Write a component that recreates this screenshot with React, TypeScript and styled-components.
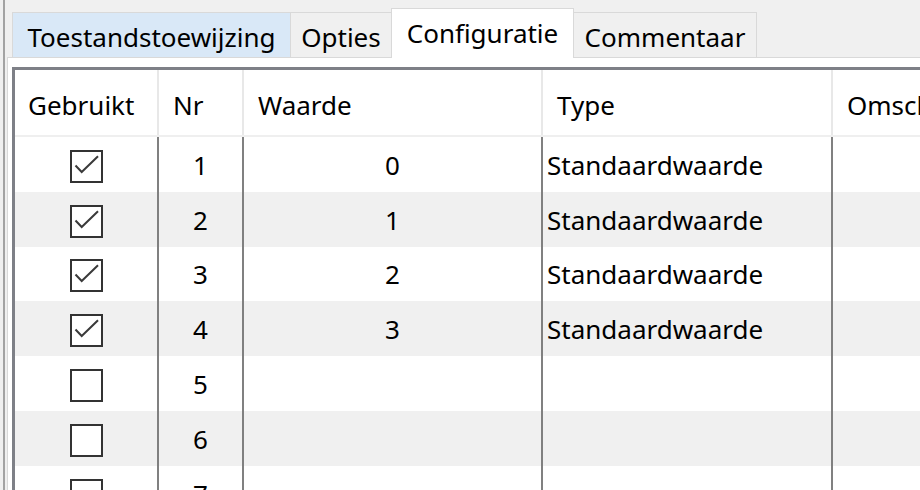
import React from "react";
import styled, { createGlobalStyle } from "styled-components";

const GlobalStyle = createGlobalStyle`
  html, body {
    margin: 0;
    padding: 0;
    background: #f0f0f0;
    overflow: hidden;
  }
  body {
    font-family: "Noto Sans", "Open Sans", sans-serif;
    color: #000;
  }
`;

const tabs = [
  { label: "Toestandstoewijzing", width: 279, state: "hover" },
  { label: "Opties", width: 102, state: "normal" },
  { label: "Configuratie", width: 183, state: "selected" },
  { label: "Commentaar", width: 184, state: "normal" },
];

const columns = [
  { title: "Gebruikt", width: 144 },
  { title: "Nr", width: 85 },
  { title: "Waarde", width: 299 },
  { title: "Type", width: 290 },
  { title: "Omschrijving", width: 300 },
];

const rows = [
  { nr: 1, used: true, value: "0", type: "Standaardwaarde" },
  { nr: 2, used: true, value: "1", type: "Standaardwaarde" },
  { nr: 3, used: true, value: "2", type: "Standaardwaarde" },
  { nr: 4, used: true, value: "3", type: "Standaardwaarde" },
  { nr: 5, used: false, value: "", type: "" },
  { nr: 6, used: false, value: "", type: "" },
  { nr: 7, used: false, value: "", type: "" },
];

const App: React.FC = () => {
  return (
    <>
      <GlobalStyle />
      <Window>
        <Gutter />
        <TabWidget>
          <TabBar>
            {tabs.map((t) => (
              <Tab key={t.label} $w={t.width} $state={t.state}>
                {t.label}
              </Tab>
            ))}
          </TabBar>
          <Pane>
            <Table>
              <HeaderRow>
                {columns.map((c) => (
                  <HeaderCell key={c.title} $w={c.width}>
                    {c.title}
                  </HeaderCell>
                ))}
              </HeaderRow>
              {rows.map((r, i) => (
                <Row key={r.nr} $alt={i % 2 === 1}>
                  <Cell $w={columns[0].width} $align="center">
                    <CheckBox>
                      {r.used && (
                        <svg width="29" height="29" viewBox="0 0 29 29">
                          <path
                            d="M3.5 13.5 L9.7 20 L26 4.2"
                            fill="none"
                            stroke="#3a3a3a"
                            strokeWidth="2"
                          />
                        </svg>
                      )}
                    </CheckBox>
                  </Cell>
                  <Cell $w={columns[1].width} $align="center">
                    {r.nr}
                  </Cell>
                  <Cell $w={columns[2].width} $align="center">
                    {r.value}
                  </Cell>
                  <Cell $w={columns[3].width} $align="left">
                    {r.type}
                  </Cell>
                  <Cell $w={columns[4].width} $align="left" />
                </Row>
              ))}
            </Table>
          </Pane>
        </TabWidget>
      </Window>
    </>
  );
};

const Window = styled.div`
  display: flex;
  width: 920px;
  height: 490px;
  overflow: hidden;
`;

const Gutter = styled.div`
  width: 3px;
  flex: none;
  border-right: 2px solid #a3a3a3;
  margin-right: 2px;
`;

const TabWidget = styled.div`
  flex: 1;
  display: flex;
  flex-direction: column;
  min-width: 0;
`;

const TabBar = styled.div`
  height: 57px;
  display: flex;
  align-items: flex-end;
  padding-left: 5px;
  position: relative;
  z-index: 1;
`;

const Tab = styled.div<{ $w: number; $state: string }>`
  box-sizing: border-box;
  width: ${(p) => p.$w}px;
  height: ${(p) => (p.$state === "selected" ? 50 : 45)}px;
  margin-bottom: ${(p) => (p.$state === "selected" ? -1 : 0)}px;
  margin-left: -1px;
  border: 1px solid #d9d9d9;
  border-bottom: none;
  background: ${(p) =>
    p.$state === "selected"
      ? "#ffffff"
      : p.$state === "hover"
      ? "#d9e8f7"
      : "#f0f0f0"};
  position: relative;
  z-index: ${(p) => (p.$state === "selected" ? 2 : 1)};
  display: flex;
  justify-content: center;
  align-items: ${(p) => (p.$state === "selected" ? "flex-start" : "flex-end")};
  padding-top: ${(p) => (p.$state === "selected" ? 6 : 0)}px;
  padding-bottom: ${(p) => (p.$state === "selected" ? 0 : 2)}px;
  font-size: 26px;
  line-height: 36px;
  white-space: nowrap;

  &:first-child {
    margin-left: 0;
  }
`;

const Pane = styled.div`
  flex: 1;
  background: #fff;
  border-top: 1px solid #d9d9d9;
  border-left: 1px solid #d9d9d9;
  padding: 9px 0 0 4px;
  overflow: hidden;
`;

const Table = styled.div`
  border-top: 3px solid #7e8087;
  border-left: 3px solid #7e8087;
  width: 1200px;
`;

const HeaderRow = styled.div`
  display: flex;
  height: 65px;
  border-bottom: 2px solid #efefef;
`;

const HeaderCell = styled.div<{ $w: number }>`
  box-sizing: border-box;
  width: ${(p) => p.$w}px;
  flex: none;
  border-right: 2px solid #e8e8e8;
  padding: 17px 0 0 13px;
  font-size: 26px;
  line-height: 36px;
  white-space: nowrap;

  &:not(:first-child) {
    padding-left: 14px;
  }
`;

const Row = styled.div<{ $alt: boolean }>`
  display: flex;
  height: 54.8px;
  background: ${(p) => (p.$alt ? "#f0f0f0" : "#ffffff")};
`;

const Cell = styled.div<{ $w: number; $align: "center" | "left" }>`
  box-sizing: border-box;
  width: ${(p) => p.$w}px;
  flex: none;
  border-right: 2px solid #808080;
  display: flex;
  align-items: center;
  justify-content: ${(p) => (p.$align === "center" ? "center" : "flex-start")};
  padding: 1px 0 0 ${(p) => (p.$align === "left" ? 4 : 0)}px;
  font-size: 26px;
  line-height: 36px;
  white-space: nowrap;
`;

const CheckBox = styled.div`
  box-sizing: border-box;
  width: 33px;
  height: 33px;
  margin-top: 3px;
  border: 2px solid #333;
  background: #fff;
  display: flex;

  svg {
    display: block;
  }
`;

export default App;
